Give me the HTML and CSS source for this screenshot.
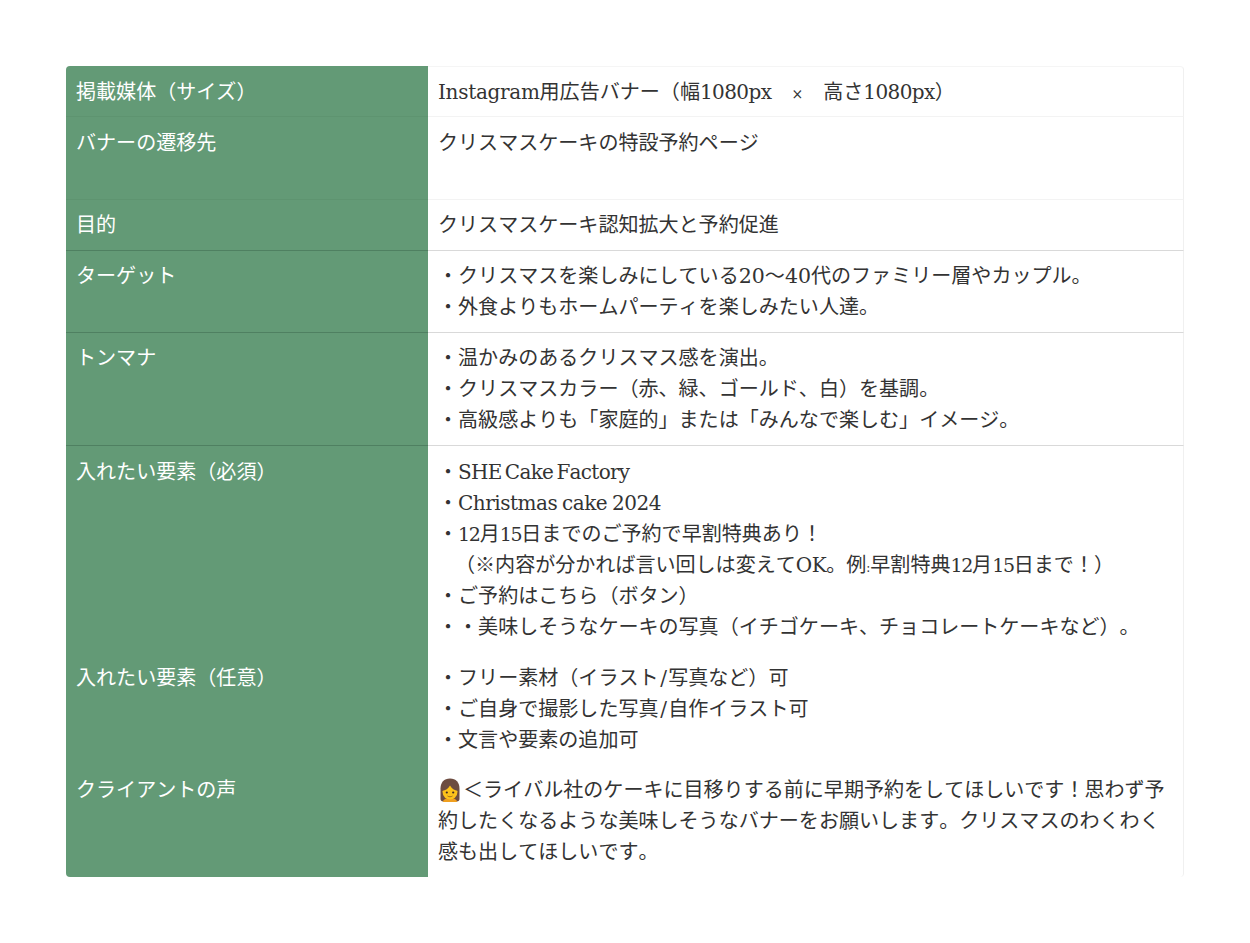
FILE: index.html
```html
<!DOCTYPE html>
<html lang="ja">
<head>
<meta charset="utf-8">
<title>バナー要件</title>
<link rel="stylesheet" href="styles.css">
</head>
<body>
<div class="wrap">
<table class="spec">
<colgroup><col class="col-head"><col class="col-body"></colgroup>
<tbody>
<tr class="soft"><th>掲載媒体（サイズ）</th><td><span class="lat word">Instagram</span>用広告バナー（幅<span class="lat size">1080px</span>　<span class="times">×</span>　高さ<span class="lat size">1080px</span>）</td></tr>
<tr class="soft dest"><th>バナーの遷移先</th><td>クリスマスケーキの特設予約ページ<br><br></td></tr>
<tr class="line purpose"><th>目的</th><td>クリスマスケーキ認知拡大と予約促進</td></tr>
<tr class="line"><th>ターゲット</th><td>・クリスマスを楽しみにしている<span class="lat wide">20</span>〜<span class="lat wide">40</span>代のファミリー層やカップル。<br>・外食よりもホームパーティを楽しみたい人達。</td></tr>
<tr class="line tone"><th>トンマナ</th><td>・温かみのあるクリスマス感を演出。<br>・クリスマスカラー（赤、緑、ゴールド、白）を基調。<br>・高級感よりも「家庭的」または「みんなで楽しむ」イメージ。</td></tr>
<tr class="open"><th>入れたい要素（必須）</th><td>・<span class="lat brand">SHE Cake Factory</span><br>・<span class="lat phrase">Christmas cake 2024</span><br>・<span class="lat narrow">12</span>月<span class="lat narrow">15</span>日までのご予約で早割特典あり！<br><span class="indent"></span>（※内容が分かれば言い回しは変えて<span class="lat">OK</span>。例<span class="lat colon">:</span>早割特典<span class="lat narrow">12</span>月<span class="lat narrow">15</span>日まで！）<br>・ご予約はこちら（ボタン）<br>・・美味しそうなケーキの写真（イチゴケーキ、チョコレートケーキなど）。</td></tr>
<tr class="open"><th>入れたい要素（任意）</th><td>・フリー素材（イラスト<span class="lat slash">/</span>写真など）可<br>・ご自身で撮影した写真<span class="lat slash">/</span>自作イラスト可<br>・文言や要素の追加可</td></tr>
<tr class="open"><th>クライアントの声</th><td><svg class="emoji" viewBox="0 0 24 24" aria-hidden="true"><path d="M12 .5C6 .5 2.500 4.500 2.500 10.500V21c0 1.500 1 2.500 2.500 2.500h14c1.500 0 2.500-1 2.500-2.500V10.500C21.500 4.500 18 .5 12 .5z" fill="#6d4c41"/><path d="M5 24c0-2.500 3-4 7-4s7 1.500 7 4z" fill="#f0a020"/><ellipse cx="12" cy="13.500" rx="7.500" ry="8" fill="#fcc21b"/><path d="M4 13c3.500-.5 6.500-2.500 8-5.500 1.500 3 4.500 5 8 5.500V7l-3.500-3.500h-9L4 7z" fill="#6d4c41"/><circle cx="8.800" cy="14.500" r="1.100" fill="#3e2723"/><circle cx="15.200" cy="14.500" r="1.100" fill="#3e2723"/><path d="M9.500 18c1.400 1 3.600 1 5 0" fill="none" stroke="#8d5a1d" stroke-width=".8"/></svg>＜ライバル社のケーキに目移りする前に早期予約をしてほしいです！思わず予約したくなるような美味しそうなバナーをお願いします。クリスマスのわくわく感も出してほしいです。</td></tr>
</tbody>
</table>
</div>
</body>
</html>
```
FILE: styles.css
```css
* { box-sizing: border-box; }
html, body { margin: 0; background: #fff; }
.wrap { padding: 66px 66px 0; }
.spec {
  width: 1118px;
  border-collapse: separate;
  border-spacing: 0;
  table-layout: fixed;
  font-family: "Noto Sans CJK JP", sans-serif;
  font-size: 20.06px;
  line-height: 30.75px;
  color: #333;
  text-spacing-trim: space-all;
  font-kerning: none;
}
.col-head { width: 362px; }
.spec th, .spec td {
  padding: 9.500px 10px 10px;
  text-align: left;
  vertical-align: top;
  font-weight: 400;
}
.spec th {
  background: #639a76;
  color: #fff;
}
.spec td { border-right: 1px solid #f0f0f0; }
.spec .lat {
  font-family: "DejaVu Serif", serif;
  font-size: 20px;
  line-height: 0;
  letter-spacing: -.5px;
  word-spacing: -3px;
}
.spec .word { letter-spacing: -.3px; }
.spec .size { letter-spacing: -.6px; }
.spec .brand { letter-spacing: -.7px; word-spacing: -2.500px; }
.spec .phrase { word-spacing: -1px; }
.spec .narrow { font-size: 19px; letter-spacing: -1.300px; }
.spec .wide { font-size: 20.500px; letter-spacing: 0; }
.spec .colon { font-size: 12px; letter-spacing: 0; }
.spec .slash { margin: 0 1.700px; }
.spec .times { font-family: "DejaVu Serif", serif; font-size: 14px; line-height: 0; }
.indent { display: inline-block; width: 17px; }
.spec tr:first-child th { border-top-left-radius: 4px; }
.spec tr:first-child td { border-top: 1px solid #f5f5f5; border-top-right-radius: 4px; padding-top: 8.500px; }
.spec tr:last-child th { border-bottom-left-radius: 4px; }
.spec tr:last-child td { border-bottom-right-radius: 4px; }
.soft th { border-bottom: 1px solid #5e9470; }
.soft td { border-bottom: 1px solid #f3f3f3; }
.line th { border-bottom: 1px solid #4f8061; }
.line td { border-bottom: 1px solid #d9d9d9; }
.dest th, .dest td { padding-bottom: 11px; }
.purpose th, .purpose td { padding-top: 8.500px; }
.tone th, .tone td { padding-bottom: 11px; }
.open th, .open td { line-height: 30.900px; padding-top: 10px; }
.emoji { width: 24px; height: 24px; vertical-align: -5px; margin-right: 1px; }
```
